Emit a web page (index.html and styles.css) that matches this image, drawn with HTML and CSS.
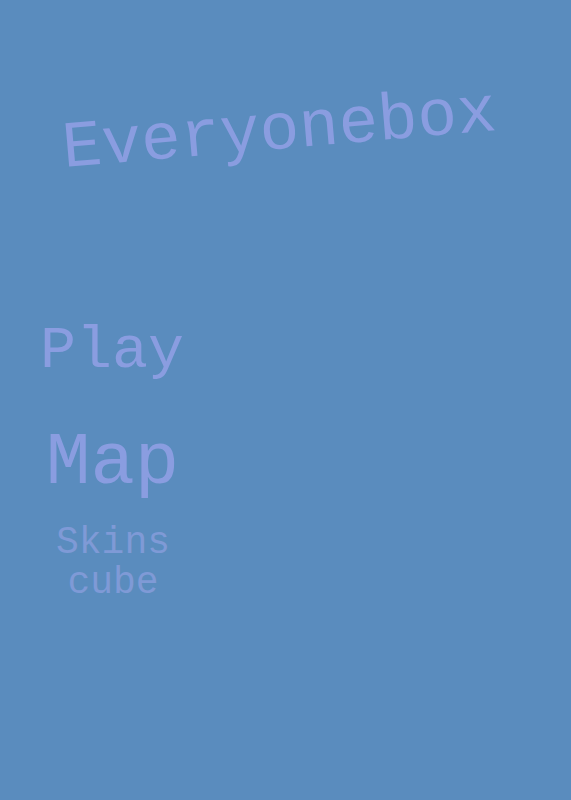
FILE: index.html
```html
<!DOCTYPE html>
<html>
<head>
<meta charset="utf-8">
<link rel="stylesheet" href="styles.css">
</head>
<body>
<div class="page">
  <h1 class="title">Everyonebox</h1>
  <div class="menu">
    <div class="item play">Play</div>
    <div class="item map">Map</div>
    <div class="item skins">Skins<br>cube</div>
  </div>
</div>
</body>
</html>
```
FILE: styles.css
```css
html, body {
  margin: 0;
  padding: 0;
  background: #5a8cbe;
}
.page {
  width: 571px;
  height: 800px;
  display: flex;
  flex-direction: column;
  font-family: "Courier New", "Nimbus Mono PS", "FreeMono", "Liberation Mono", monospace;
  color: #8a9de0;
}
.title {
  margin: 91px 0 0 0;
  font-size: 66px;
  font-weight: normal;
  line-height: 80px;
  text-align: center;
  padding-right: 12px;
  transform: rotate(-4.9deg);
}
.menu {
  display: flex;
  flex-direction: column;
  align-items: flex-start;
  margin-top: 150px;
}
.item {
  line-height: 1;
}
.play {
  font-size: 60px;
  margin-left: 40px;
}
.map {
  font-size: 74px;
  margin-left: 46px;
  margin-top: 45px;
}
.skins {
  font-size: 38px;
  line-height: 40px;
  text-align: center;
  margin-left: 56px;
  margin-top: 23px;
  color: #7f9ad6;
}
```
